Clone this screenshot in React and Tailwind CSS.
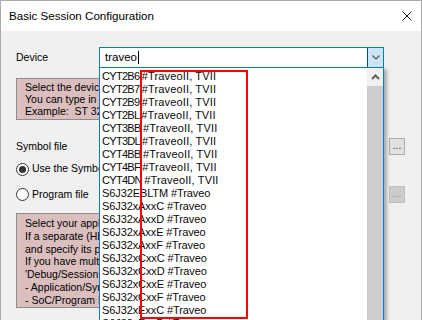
const devices = [
  ["CYT2B6", "#TraveoII, TVII"],
  ["CYT2B7", "#TraveoII, TVII"],
  ["CYT2B9", "#TraveoII, TVII"],
  ["CYT2BL", "#TraveoII, TVII"],
  ["CYT3BB", "#TraveoII, TVII"],
  ["CYT3DL", "#TraveoII, TVII"],
  ["CYT4BB", "#TraveoII, TVII"],
  ["CYT4BF", "#TraveoII, TVII"],
  ["CYT4DN", "#TraveoII, TVII"],
  ["S6J32EBLTM", "#Traveo"],
  ["S6J32xAxxC", "#Traveo"],
  ["S6J32xAxxD", "#Traveo"],
  ["S6J32xAxxE", "#Traveo"],
  ["S6J32xAxxF", "#Traveo"],
  ["S6J32xCxxC", "#Traveo"],
  ["S6J32xCxxD", "#Traveo"],
  ["S6J32xCxxE", "#Traveo"],
  ["S6J32xCxxF", "#Traveo"],
  ["S6J32xExxC", "#Traveo"],
  ["S6J32xExxD", "#Traveo"],
];

const BrowseButton = ({ disabled }) => (
  <button
    type="button"
    className={`w-[16px] h-[17px] border flex items-end justify-center pb-[3px] text-[10px] leading-none ${
      disabled
        ? "border-[#bfbfbf] bg-[#cccccc] text-[#8a8a8a]"
        : "border-[#adadad] bg-[#e1e1e1] text-[#1a1a4a]"
    }`}
  >
    ...
  </button>
);

const Radio = ({ checked, label }) => (
  <div className="flex items-center gap-[3px]">
    <span className="w-[13px] h-[13px] rounded-full border border-[#333333] bg-white flex items-center justify-center">
      {checked && <span className="w-[7px] h-[7px] rounded-full bg-[#333333]" />}
    </span>
    <span>{label}</span>
  </div>
);

export default function App() {
  return (
    <div className="relative w-[422px] h-[320px] overflow-hidden border border-b-0 border-[#aaaaaa] bg-[#f0f0f0] flex flex-col font-['Liberation_Sans',Arial,sans-serif] text-black">
      {/* title bar */}
      <div className="h-[30px] shrink-0 bg-white flex items-center justify-between pl-[8px] pr-[9px]">
        <span className="text-[11.6px] pb-[1px]">Basic Session Configuration</span>
        <svg width="10" height="10" viewBox="0 0 10 10" className="mb-[1px]">
          <path d="M0.5 0.5 L9.5 9.5 M9.5 0.5 L0.5 9.5" stroke="#111" strokeWidth="1" />
        </svg>
      </div>

      {/* body */}
      <div className="flex-1 flex flex-col pl-[15px] pr-[16px] pt-[16px] text-[10.5px]">
        <div className="flex items-center h-[21px]">
          <span className="w-[83px]">Device</span>
          <div className="w-[285px] h-[21px] border border-[#0078d7] bg-white flex items-center">
            <span className="pl-[5px] text-[11.5px]">traveo</span>
            <span className="w-px h-[13px] bg-black ml-[1px]" />
            <div className="ml-auto w-[16px] h-full border-l border-[#005499] bg-[#cce4f7] flex items-center justify-center">
              <svg width="8" height="5" viewBox="0 0 8 5">
                <path d="M0.5 0.5 L4 4 L7.5 0.5" stroke="#555" strokeWidth="1.2" fill="none" />
              </svg>
            </div>
          </div>
        </div>

        <div className="mt-[10px] w-[368px] h-[42px] border border-[#8c8c8c] bg-[#dbbfbf] px-[8px] pt-[2px] leading-[12px] whitespace-pre overflow-hidden text-[10.5px]">
          <div>Select the device from the list below.</div>
          <div>You can type in a part of the name to filter it.</div>
          <div>Example:  ST 32F407</div>
        </div>

        <div className="mt-[18px] h-[17px] flex items-center justify-between">
          <span>Symbol file</span>
          <BrowseButton />
        </div>

        <div className="mt-[7px] h-[14px] flex items-center">
          <Radio checked label="Use the Symbol file of the Debug/Session" />
        </div>

        <div className="mt-[10px] h-[17px] flex items-center justify-between">
          <Radio label="Program file" />
          <BrowseButton disabled />
        </div>

        <div className="mt-[10px] w-[368px] h-[95px] border border-[#8c8c8c] bg-[#dbbfbf] px-[8px] pt-[3px] leading-[12.8px] whitespace-pre overflow-hidden">
          <div>Select your application's symbol file.</div>
          <div>If a separate (HEX/BIN) file is loaded, select it here</div>
          <div>and specify its path.</div>
          <div>If you have multiple applications, use the</div>
          <div>'Debug/Session Configuration' dialog:</div>
          <div>- Application/Symbol file</div>
          <div>- SoC/Program File</div>
        </div>
      </div>

      {/* dropdown list */}
      <div className="absolute left-[98px] top-[66px] w-[285px] h-[262px] border border-[#0078d7] bg-white flex shadow-[3px_2px_3px_rgba(0,0,0,0.28)]">
        <div className="flex-1 pt-[2px] text-[11px] text-[#0a0a0a]">
          {devices.map(([name, tag]) => {
            const tvii = name.startsWith("CYT");
            return (
              <div key={name} className="h-[13px] leading-[13px] pl-[2px] whitespace-nowrap">
                <span className={tvii ? "tracking-[-0.7px]" : "tracking-[-0.1px]"}>{name} </span>
                <span className={tvii ? "tracking-[0.15px]" : "tracking-[-0.1px]"}>{tag}</span>
              </div>
            );
          })}
        </div>
        <div className="w-[16px] flex flex-col">
          <div className="h-[18px] bg-[#f0f0f0] flex items-center justify-center">
            <svg width="9" height="6" viewBox="0 0 9 6">
              <path d="M1 5 L4.5 1.5 L8 5" stroke="#606060" strokeWidth="2" fill="none" />
            </svg>
          </div>
          <div className="flex-1 bg-[#cdcdcd]" />
        </div>
      </div>

      {/* red highlight */}
      <div className="absolute left-[139px] top-[69px] w-[108px] h-[249px] border-2 border-[#ff0000]" />
    </div>
  );
}
